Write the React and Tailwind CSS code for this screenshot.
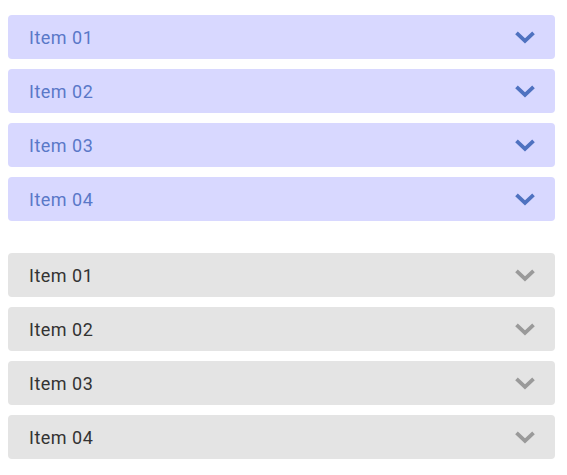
const items = ["Item 01", "Item 02", "Item 03", "Item 04"];

function Chevron({ color }) {
  return (
    <svg width="22" height="14" viewBox="0 0 22 14" className={color}>
      <polyline
        points="2.5,2.8 11,10.8 19.5,2.8"
        fill="none"
        stroke="currentColor"
        strokeWidth="3.8"
        strokeLinecap="butt"
        strokeLinejoin="miter"
      />
    </svg>
  );
}

function Group({ bg, text, icon }) {
  return (
    <div className="flex flex-col gap-[10px]">
      {items.map((item) => (
        <div
          key={item}
          className={`flex h-[44px] items-center justify-between rounded-[4px] pl-[21px] pr-[19px] ${bg}`}
        >
          <span className={`text-[18px] tracking-[0.5px] ${text}`}>{item}</span>
          <Chevron color={icon} />
        </div>
      ))}
    </div>
  );
}

export default function App() {
  return (
    <div
      className="flex w-[567px] flex-col gap-[32px] bg-white pl-[8px] pr-[12px] pt-[15px]"
      style={{ fontFamily: "Roboto, 'Open Sans', sans-serif" }}
    >
      <Group bg="bg-[#d8d8ff]" text="text-[#5a78c8]" icon="text-[#4f72c0]" />
      <Group bg="bg-[#e4e4e4]" text="text-[#333333]" icon="text-[#9a9a9a]" />
    </div>
  );
}
